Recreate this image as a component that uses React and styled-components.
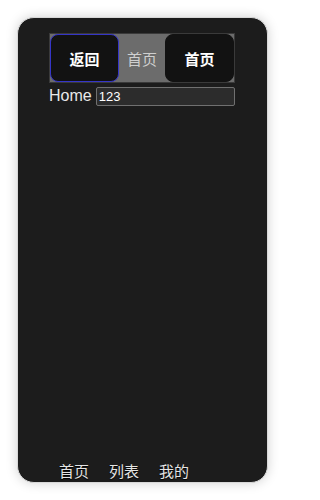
import React from "react";
import styled, { createGlobalStyle } from "styled-components";

const Global = createGlobalStyle`
  html, body { margin: 0; padding: 0; background: #fff; }
  body { font-family: "Liberation Sans", "Noto Sans CJK SC", Arial, sans-serif; }
  * { box-sizing: border-box; }
`;

const Page = styled.div`
  padding: 17px 18px 18px 17px;
`;

const Phone = styled.div`
  width: 251px;
  height: 466px;
  background: #1c1c1c;
  border: 1px solid #d8d8d8;
  border-radius: 17px;
  box-shadow: 0 0 12px rgba(0, 0, 0, 0.18);
  padding: 15px 32px 0 31px;
  display: flex;
  flex-direction: column;
`;

const NavBar = styled.div`
  display: flex;
  align-items: stretch;
  height: 50px;
  background: #6c6c6c;
  border: 1px solid #3a3a3a;
`;

const NavButton = styled.button`
  width: 69px;
  background: #121212;
  color: #fff;
  border: 1px solid ${(p) => (p.$focused ? "#3535c8" : "#121212")};
  border-radius: 8px;
  font-family: "Liberation Sans", "Noto Sans CJK SC", sans-serif;
  font-size: 15px;
  font-weight: bold;
  padding: 0;
  margin: 0;
`;

const NavTitle = styled.div`
  flex: 1;
  display: flex;
  align-items: center;
  justify-content: center;
  color: #cfcfcf;
  font-size: 15px;
`;

const Row = styled.div`
  display: flex;
  align-items: center;
  margin-top: 3px;
  gap: 4px;
`;

const Label = styled.span`
  color: #e8e8e8;
  font-size: 16px;
  line-height: 20px;
`;

const Input = styled.input`
  flex: 1;
  min-width: 0;
  height: 19px;
  background: #2c2c2c;
  color: #fff;
  border: 1px solid #707070;
  border-radius: 2px;
  padding: 1px 2px;
  font-family: "Liberation Sans", Arial, sans-serif;
  font-size: 13px;
  outline: none;
`;

const Spacer = styled.div`
  flex: 1;
`;

const TabBar = styled.div`
  display: flex;
  height: 24px;
  align-items: center;
`;

const Tab = styled.div`
  width: 50px;
  text-align: center;
  color: #e4e4e4;
  font-size: 15px;
  text-shadow: 0 1px 1px #000;
`;

export default function App() {
  return (
    <>
      <Global />
      <Page>
        <Phone>
          <NavBar>
            <NavButton $focused>返回</NavButton>
            <NavTitle>首页</NavTitle>
            <NavButton>首页</NavButton>
          </NavBar>
          <Row>
            <Label>Home</Label>
            <Input defaultValue="123" />
          </Row>
          <Spacer />
          <TabBar>
            <Tab>首页</Tab>
            <Tab>列表</Tab>
            <Tab>我的</Tab>
          </TabBar>
        </Phone>
      </Page>
    </>
  );
}
